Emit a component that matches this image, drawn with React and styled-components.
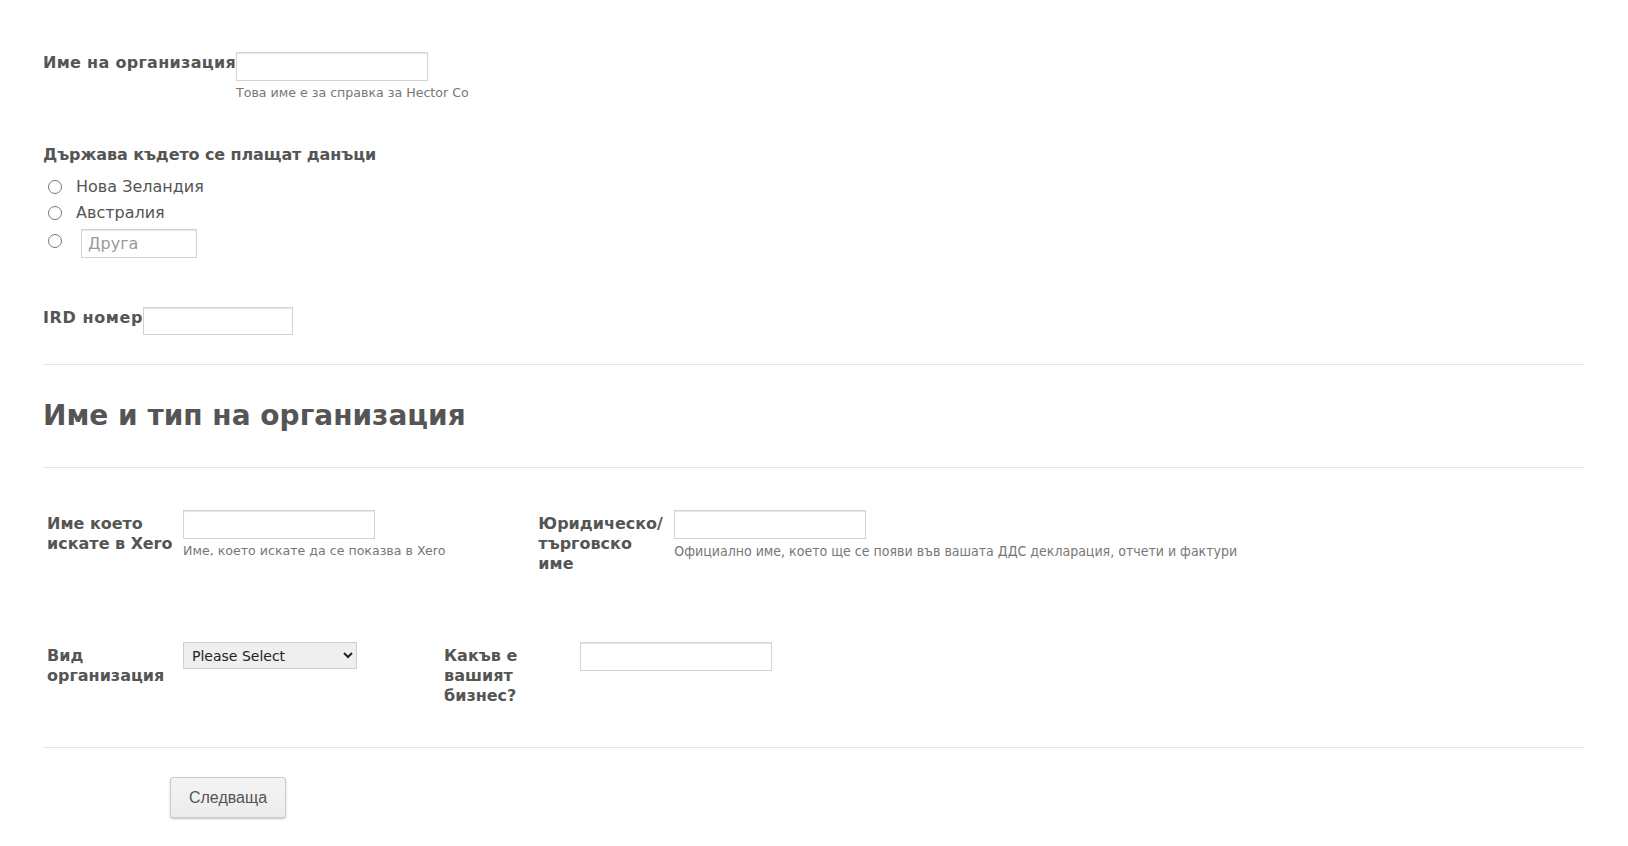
import React from "react";
import styled, { createGlobalStyle } from "styled-components";

const GlobalStyle = createGlobalStyle`
  html, body { margin: 0; padding: 0; background: #ffffff; }
  body {
    font-family: "DejaVu Sans", Verdana, sans-serif;
    color: #555555;
  }
  * { box-sizing: border-box; }
`;

const Page = styled.div`
  padding: 52px 44px 40px 43px;
`;

const InlineField = styled.div`
  display: flex;
  align-items: flex-start;
  margin-top: ${(p) => p.$mt || 0}px;
`;

const InlineLabel = styled.label`
  font-size: 16px;
  font-weight: bold;
  line-height: 21px;
  color: #555555;
  white-space: nowrap;
  letter-spacing: ${(p) => p.$ls || 0}px;
`;

const InputCol = styled.div`
  display: flex;
  flex-direction: column;
  align-items: flex-start;
`;

const TextInput = styled.input`
  width: ${(p) => p.$w || 192}px;
  height: ${(p) => p.$h || 29}px;
  border: 1px solid #d3d3d3;
  box-shadow: inset 0 1px 1px #e6e6e6;
  background: #fff;
  font-family: "DejaVu Sans", Verdana, sans-serif;
  font-size: 16px;
  color: #555;
  padding: 0 6px;
  margin: ${(p) => p.$m || "0"};
  outline: none;
  &::placeholder { color: #9a9a9a; }
`;

const Help = styled.div`
  margin-top: 4px;
  font-size: 12.6px;
  line-height: 16px;
  color: #777777;
  white-space: nowrap;
`;

const HelpWide = styled(Help)`
  font-family: "DejaVu Sans Condensed", "DejaVu Sans", sans-serif;
  font-stretch: condensed;
  font-size: 14px;
`;

const GroupTitle = styled.div`
  margin-top: 44px;
  font-size: 16px;
  font-weight: bold;
  line-height: 20px;
  color: #555555;
  letter-spacing: -0.1px;
`;

const RadioList = styled.div`
  margin-top: 9px;
  display: flex;
  flex-direction: column;
`;

const RadioRow = styled.label`
  display: flex;
  align-items: flex-start;
  min-height: 26px;
  font-size: 16px;
  line-height: 26px;
  color: #555555;
`;

const Radio = styled.input.attrs({ type: "radio" })`
  width: 14px;
  height: 14px;
  margin: ${(p) => p.$top || 6}px ${(p) => p.$gap || 14}px 0 5px;
  flex: none;
`;

const Divider = styled.hr`
  border: 0;
  border-top: 1px solid #e6e6e6;
  margin: ${(p) => p.$mt || 0}px 0 0 0;
  height: 0;
`;

const SectionHeading = styled.h2`
  margin: 34px 0 0 0;
  font-size: 28px;
  line-height: 34px;
  font-weight: bold;
  color: #555555;
`;

const FieldRow = styled.div`
  display: flex;
  align-items: flex-start;
  gap: ${(p) => p.$gap}px;
  margin-top: ${(p) => p.$mt}px;
`;

const Field = styled.div`
  display: flex;
  align-items: flex-start;
`;

const SideLabel = styled.label`
  width: 136px;
  padding: 4px;
  margin-right: 4px;
  font-size: 16px;
  font-weight: bold;
  line-height: 20px;
  color: #555555;
  flex: none;
`;

const Select = styled.select`
  width: 174px;
  height: 27px;
  background-color: #efefef;
  border: 1px solid #d0d0d0;
  font-family: "DejaVu Sans", Verdana, sans-serif;
  font-size: 14px;
  color: #222;
  padding: 0 4px;
  margin: 0;
`;

const ButtonBar = styled.div`
  margin-top: 29px;
  padding-left: 127px;
`;

const NextButton = styled.button`
  width: 116px;
  height: 41px;
  font-family: "Liberation Sans", Arial, sans-serif;
  font-size: 16px;
  color: #555555;
  background: linear-gradient(#f4f4f4, #ececec);
  border: 1px solid #cccccc;
  border-radius: 3px;
  box-shadow: 0 1px 2px rgba(0, 0, 0, 0.25);
  cursor: pointer;
`;

export default function App() {
  return (
    <>
      <GlobalStyle />
      <Page>
        <InlineField>
          <InlineLabel $ls={0.3}>Име на организация</InlineLabel>
          <InputCol>
            <TextInput />
            <Help>Това име е за справка за Hector Co</Help>
          </InputCol>
        </InlineField>

        <GroupTitle>Държава където се плащат данъци</GroupTitle>
        <RadioList>
          <RadioRow>
            <Radio name="country" />
            Нова Зеландия
          </RadioRow>
          <RadioRow>
            <Radio name="country" />
            Австралия
          </RadioRow>
          <RadioRow>
            <Radio name="country" $gap={19} $top={8} />
            <TextInput $w={116} $h={29} $m="3px 0 0 0" placeholder="Друга" />
          </RadioRow>
        </RadioList>

        <InlineField $mt={49}>
          <InlineLabel $ls={0.6}>IRD номер</InlineLabel>
          <TextInput $w={150} $h={28} />
        </InlineField>

        <Divider $mt={29} />
        <SectionHeading>Име и тип на организация</SectionHeading>
        <Divider $mt={34} />

        <FieldRow $gap={89} $mt={42}>
          <Field>
            <SideLabel>Име което искате в Xero</SideLabel>
            <InputCol>
              <TextInput />
              <Help>Име, което искате да се показва в Xero</Help>
            </InputCol>
          </Field>
          <Field>
            <SideLabel>
              Юридическо/<wbr />търговско име
            </SideLabel>
            <InputCol>
              <TextInput />
              <HelpWide>
                Официално име, което ще се появи във вашата ДДС декларация, отчети и фактури
              </HelpWide>
            </InputCol>
          </Field>
        </FieldRow>

        <FieldRow $gap={83} $mt={64}>
          <Field>
            <SideLabel>Вид организация</SideLabel>
            <Select defaultValue="">
              <option value="">Please Select</option>
            </Select>
          </Field>
          <Field>
            <SideLabel>Какъв е вашият бизнес?</SideLabel>
            <TextInput />
          </Field>
        </FieldRow>

        <Divider $mt={37} />
        <ButtonBar>
          <NextButton>Следваща</NextButton>
        </ButtonBar>
      </Page>
    </>
  );
}
